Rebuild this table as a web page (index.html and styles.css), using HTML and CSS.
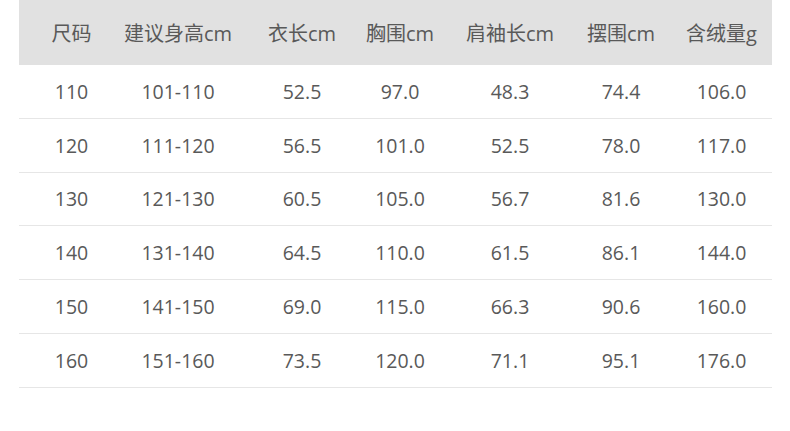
FILE: index.html
```html
<!DOCTYPE html>
<html lang="zh-CN">
<head>
<meta charset="utf-8">
<title>尺码表</title>
<link rel="stylesheet" href="styles.css">
</head>
<body>
<div class="size-table">
  <div class="row head">
    <div class="cell c1">尺码</div>
    <div class="cell c2">建议身高cm</div>
    <div class="cell c3">衣长cm</div>
    <div class="cell c4">胸围cm</div>
    <div class="cell c5">肩袖长cm</div>
    <div class="cell c6">摆围cm</div>
    <div class="cell c7">含绒量g</div>
  </div>
  <div class="row">
    <div class="cell c1">110</div><div class="cell c2">101-110</div><div class="cell c3">52.5</div><div class="cell c4">97.0</div><div class="cell c5">48.3</div><div class="cell c6">74.4</div><div class="cell c7">106.0</div>
  </div>
  <div class="row">
    <div class="cell c1">120</div><div class="cell c2">111-120</div><div class="cell c3">56.5</div><div class="cell c4">101.0</div><div class="cell c5">52.5</div><div class="cell c6">78.0</div><div class="cell c7">117.0</div>
  </div>
  <div class="row">
    <div class="cell c1">130</div><div class="cell c2">121-130</div><div class="cell c3">60.5</div><div class="cell c4">105.0</div><div class="cell c5">56.7</div><div class="cell c6">81.6</div><div class="cell c7">130.0</div>
  </div>
  <div class="row">
    <div class="cell c1">140</div><div class="cell c2">131-140</div><div class="cell c3">64.5</div><div class="cell c4">110.0</div><div class="cell c5">61.5</div><div class="cell c6">86.1</div><div class="cell c7">144.0</div>
  </div>
  <div class="row">
    <div class="cell c1">150</div><div class="cell c2">141-150</div><div class="cell c3">69.0</div><div class="cell c4">115.0</div><div class="cell c5">66.3</div><div class="cell c6">90.6</div><div class="cell c7">160.0</div>
  </div>
  <div class="row">
    <div class="cell c1">160</div><div class="cell c2">151-160</div><div class="cell c3">73.5</div><div class="cell c4">120.0</div><div class="cell c5">71.1</div><div class="cell c6">95.1</div><div class="cell c7">176.0</div>
  </div>
</div>
</body>
</html>
```
FILE: styles.css
```css
html, body {
  margin: 0;
  padding: 0;
  background: #ffffff;
}

body {
  font-family: "Open Sans", "Noto Sans CJK SC", sans-serif;
  color: #595959;
}

.size-table {
  width: 753px;
  margin-left: 19px;
}

.row {
  display: grid;
  grid-template-columns: 105px 116px 111px 104px 110px 106px 101px;
  height: 53.8px;
  box-sizing: border-box;
  border-bottom: 1px solid #e6e6e6;
  font-size: 19.5px;
}

.row.head {
  height: 65px;
  background: #e1e1e1;
  border-bottom: none;
  font-size: 20px;
}

.cell {
  display: flex;
  align-items: center;
  justify-content: center;
  white-space: nowrap;
}

.head .cell {
  padding-bottom: 1px;
}

.c2 { padding-right: 8px; }
.c3 { padding-left: 13px; }
.c4 { padding-right: 6px; }
.c6 { padding-left: 6px; }
```
